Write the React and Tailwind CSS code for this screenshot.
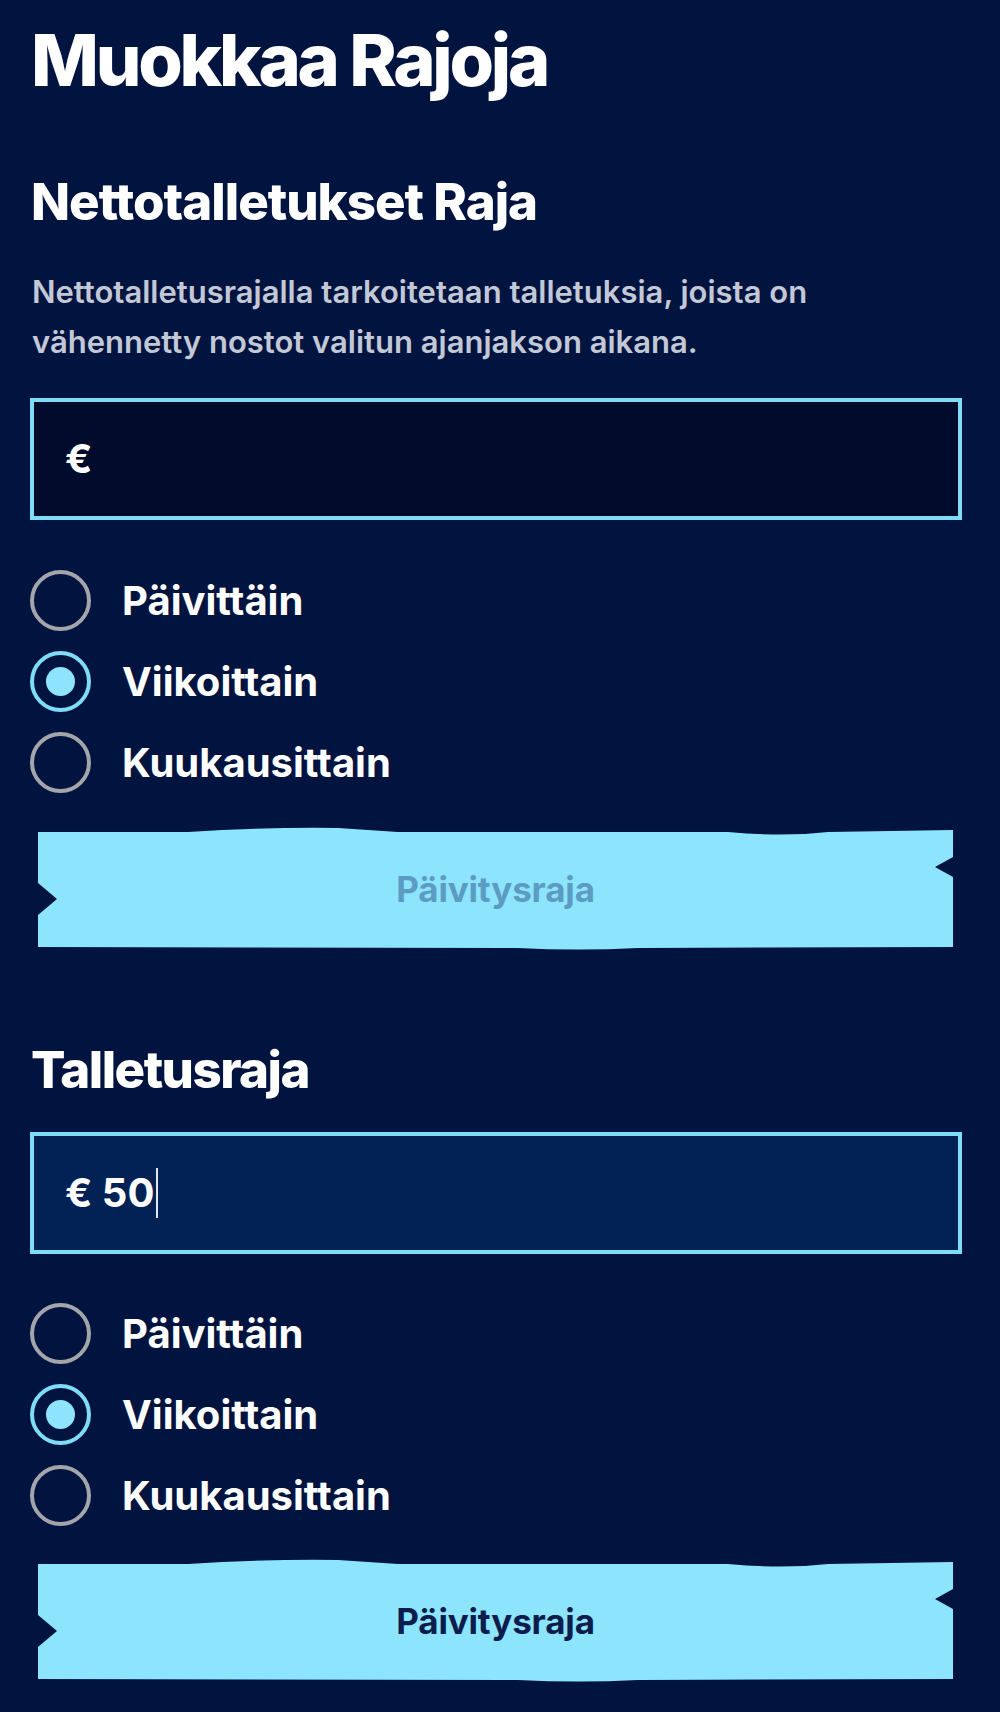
import React from "react";

function TornButton({ label, disabled }) {
  return (
    <div className="relative mx-[8px] h-[118px] w-[915px] flex items-center justify-center">
      <svg
        className="absolute inset-0 h-full w-full overflow-visible"
        viewBox="0 0 915 118"
        preserveAspectRatio="none"
        aria-hidden="true"
      >
        <path
          d="M0,2 L150,2 Q230,-3 300,-2 L360,2 L690,2 Q745,7 790,2 L915,0 L915,27 L897,37 L915,47 L915,117 L600,118 Q540,121 480,118 L0,117 L0,85 L19,69 L0,53 Z"
          fill="#8de5fd"
        />
      </svg>
      <span
        className={
          "relative text-[35px] font-bold tracking-[-0.005em] " +
          (disabled ? "text-[#5d9cc2]" : "text-[#0b1d4c]")
        }
      >
        {label}
      </span>
    </div>
  );
}

function Radio({ label, checked }) {
  return (
    <div className="flex h-[81px] items-center">
      {checked ? (
        <div className="flex h-[61px] w-[61px] items-center justify-center rounded-full border-[4px] border-[#7fdcf7]">
          <div className="h-[29px] w-[29px] rounded-full bg-[#8ee4fd]" />
        </div>
      ) : (
        <div className="h-[61px] w-[61px] rounded-full border-[4px] border-[#a3a5ab]" />
      )}
      <span className="ml-[31px] text-[40px] font-bold tracking-[0em] text-white">
        {label}
      </span>
    </div>
  );
}

function RadioGroup() {
  return (
    <div className="flex flex-col">
      <Radio label="Päivittäin" />
      <Radio label="Viikoittain" checked />
      <Radio label="Kuukausittain" />
    </div>
  );
}

export default function App() {
  return (
    <div
      className="min-h-[1712px] w-[1000px] bg-[#011440] pl-[30px] pr-[38px] pt-[20px] pb-[31px] text-white"
      style={{ fontFamily: "Inter, 'Noto Sans', sans-serif" }}
    >
      <h1 className="ml-[1px] text-[72px] leading-[80px] font-extrabold tracking-[-0.045em]">
        Muokkaa Rajoja
      </h1>

      <h2 className="ml-[1px] mt-[74px] text-[51px] leading-[56px] font-extrabold tracking-[-0.02em]">
        Nettotalletukset Raja
      </h2>

      <p className="ml-[2px] mt-[37px] text-[31px] leading-[50px] font-semibold text-[#c3c8d6]">
        Nettotalletusrajalla tarkoitetaan talletuksia, joista on
        <br />
        vähennetty nostot valitun ajanjakson aikana.
      </p>

      <div className="mt-[31px] flex h-[122px] w-[932px] items-center border-[4px] border-[#80dcf5] bg-[#010c2c] pl-[31px]">
        <span className="text-[40px] font-bold">€</span>
      </div>

      <div className="mt-[40px]">
        <RadioGroup />
      </div>

      <div className="mt-[27px]">
        <TornButton label="Päivitysraja" disabled />
      </div>

      <h2 className="ml-[1px] mt-[94px] text-[51px] leading-[56px] font-extrabold tracking-[-0.03em]">
        Talletusraja
      </h2>

      <div className="mt-[34px] flex h-[122px] w-[932px] items-center border-[4px] border-[#80dcf5] bg-[#022256] pl-[31px]">
        <span className="text-[40px] font-bold">€ 50</span>
        <span className="ml-[2px] h-[50px] w-[2px] bg-[#dfe6f2]" />
      </div>

      <div className="mt-[39px]">
        <RadioGroup />
      </div>

      <div className="mt-[26px]">
        <TornButton label="Päivitysraja" />
      </div>
    </div>
  );
}
